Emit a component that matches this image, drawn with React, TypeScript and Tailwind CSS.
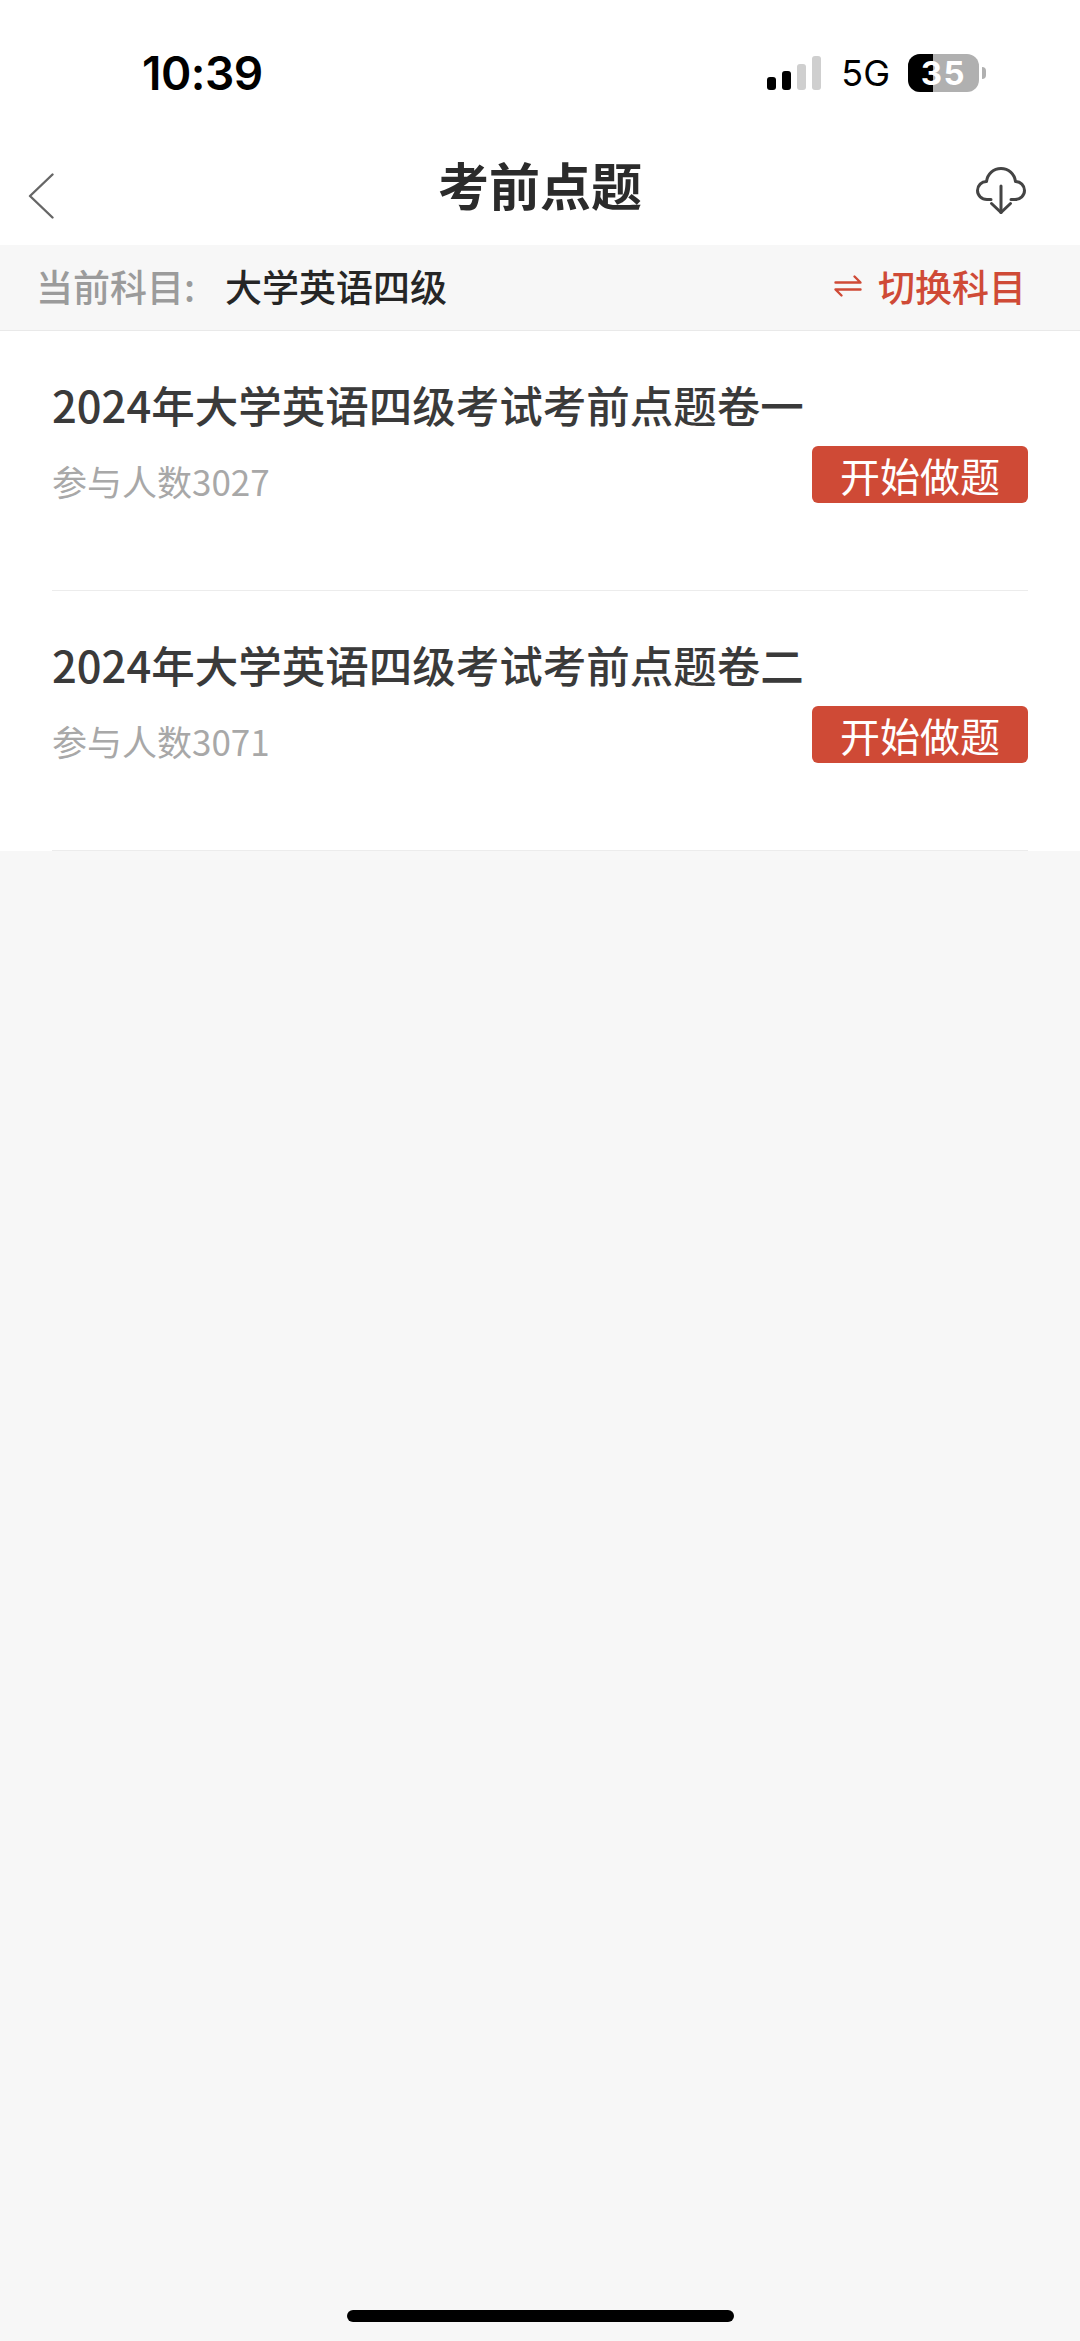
const cjk = 'font-["Noto_Sans_CJK_SC","Liberation_Sans",sans-serif]';

const papers = [
  { title: '2024年大学英语四级考试考前点题卷一', count: 3027 },
  { title: '2024年大学英语四级考试考前点题卷二', count: 3071 },
];

function Signal() {
  return (
    <div className="flex h-[34px] items-end gap-[6px]">
      <span className="h-[13px] w-[9px] rounded-[3px] bg-black" />
      <span className="h-[19px] w-[9px] rounded-[3px] bg-black" />
      <span className="h-[26px] w-[9px] rounded-[3px] bg-[#cfcfcf]" />
      <span className="h-[34px] w-[9px] rounded-[3px] bg-[#cfcfcf]" />
    </div>
  );
}

function Battery() {
  return (
    <div className="flex items-center gap-[3px]">
      <div className="relative flex h-[38px] w-[71px] items-center justify-center overflow-hidden rounded-[12px] bg-[#b0b0b0]">
        <span className="absolute inset-y-0 left-0 w-[25px] bg-black" />
        <span className="relative font-['Inter',sans-serif] text-[33px] leading-none font-bold tracking-[1.5px] text-white">35</span>
      </div>
      <span className="h-[12px] w-[4px] rounded-r-full bg-[#b0b0b0]" />
    </div>
  );
}

function SwapIcon() {
  return (
    <svg width="28" height="24" viewBox="0 0 28 24" fill="none" stroke="#cf4a36" strokeWidth="2.4" strokeLinecap="round" strokeLinejoin="round">
      <path d="M1.5 8.5H26.5L20.5 2.5" />
      <path d="M26.5 15.5H1.5L7.5 21.5" />
    </svg>
  );
}

function CloudDownload() {
  return (
    <svg width="50" height="48" viewBox="0 0 50 48" fill="none" stroke="#444444" strokeWidth="3" strokeLinecap="round" strokeLinejoin="round">
      <path d="M15 32.5H11C5.5 32.5 1.5 28.5 1.5 23.5C1.5 18.5 5.5 14.5 10.5 14.5C11.5 7 17.5 1.5 25 1.5C32.5 1.5 38.5 7 39.5 14.5C44.5 14.5 48.5 18.5 48.5 23.5C48.5 28.5 44.5 32.5 39 32.5H35" />
      <path d="M25 19V45.5" />
      <path d="M15.5 36.5L25 45.5L34.5 36.5" />
    </svg>
  );
}

export default function App() {
  return (
    <div className={`flex min-h-[2341px] flex-col bg-[#f7f7f7] ${cjk}`}>
      {/* status bar */}
      <div className="flex h-[146px] items-center justify-between bg-white pr-[94px] pl-[142px]">
        <span className="font-['Inter',sans-serif] text-[46px] leading-none font-semibold tracking-[-0.5px] text-black">10:39</span>
        <div className="flex items-center">
          <Signal />
          <span className="mr-[18px] ml-[20px] font-['Inter',sans-serif] text-[36px] leading-none font-normal text-black">5G</span>
          <Battery />
        </div>
      </div>

      {/* nav */}
      <div className="grid h-[99px] grid-cols-[1fr_auto_1fr] bg-white px-[28px]">
        <div className="pt-[27px]">
          <svg width="26" height="46" viewBox="0 0 26 46" fill="none" stroke="#666666" strokeWidth="2.4" strokeLinecap="round" strokeLinejoin="round">
            <path d="M24.5 1.5L2 23L24.5 44.5" />
          </svg>
        </div>
        <h1 className="pt-[2px] text-[51px] leading-[72px] font-bold text-[#2b2b2b]">考前点题</h1>
        <div className="flex justify-end pt-[21px] pr-[26px]">
          <CloudDownload />
        </div>
      </div>

      {/* current subject */}
      <div className="flex h-[86px] items-center justify-between border-b border-[#e9e9e9] bg-[#f7f7f7] pr-[54px] pl-[36px]">
        <div className="-mt-[3px] flex items-center text-[37px] leading-none font-medium">
          <span className="w-[189px] text-[#9b9b9b]">当前科目:</span>
          <span className="text-[#262626]">大学英语四级</span>
        </div>
        <div className="-mt-[3px] flex items-center gap-[16px] text-[37px] leading-none font-medium text-[#cf4a36]">
          <SwapIcon />
          <span>切换科目</span>
        </div>
      </div>

      {/* papers */}
      <div className="bg-white px-[52px]">
        {papers.map((p) => (
          <div key={p.title} className="h-[260px] border-b border-[#ececec] pt-[43px]">
            <div className="text-[43.5px] leading-[62px] font-medium text-[#3a3a3a]">{p.title}</div>
            <div className="mt-[10px] flex items-start justify-between">
              <span className="pt-[10px] text-[35px] leading-[50px] text-[#a8a8a8]">参与人数{p.count}</span>
              <button className="flex h-[57px] w-[216px] items-center justify-center rounded-[6px] bg-[#cf4a36] text-[40px] leading-none text-white">
                开始做题
              </button>
            </div>
          </div>
        ))}
      </div>

      <div className="flex flex-1 items-end justify-center pb-[19px]">
        <div className="h-[12px] w-[387px] rounded-full bg-black" />
      </div>
    </div>
  );
}
